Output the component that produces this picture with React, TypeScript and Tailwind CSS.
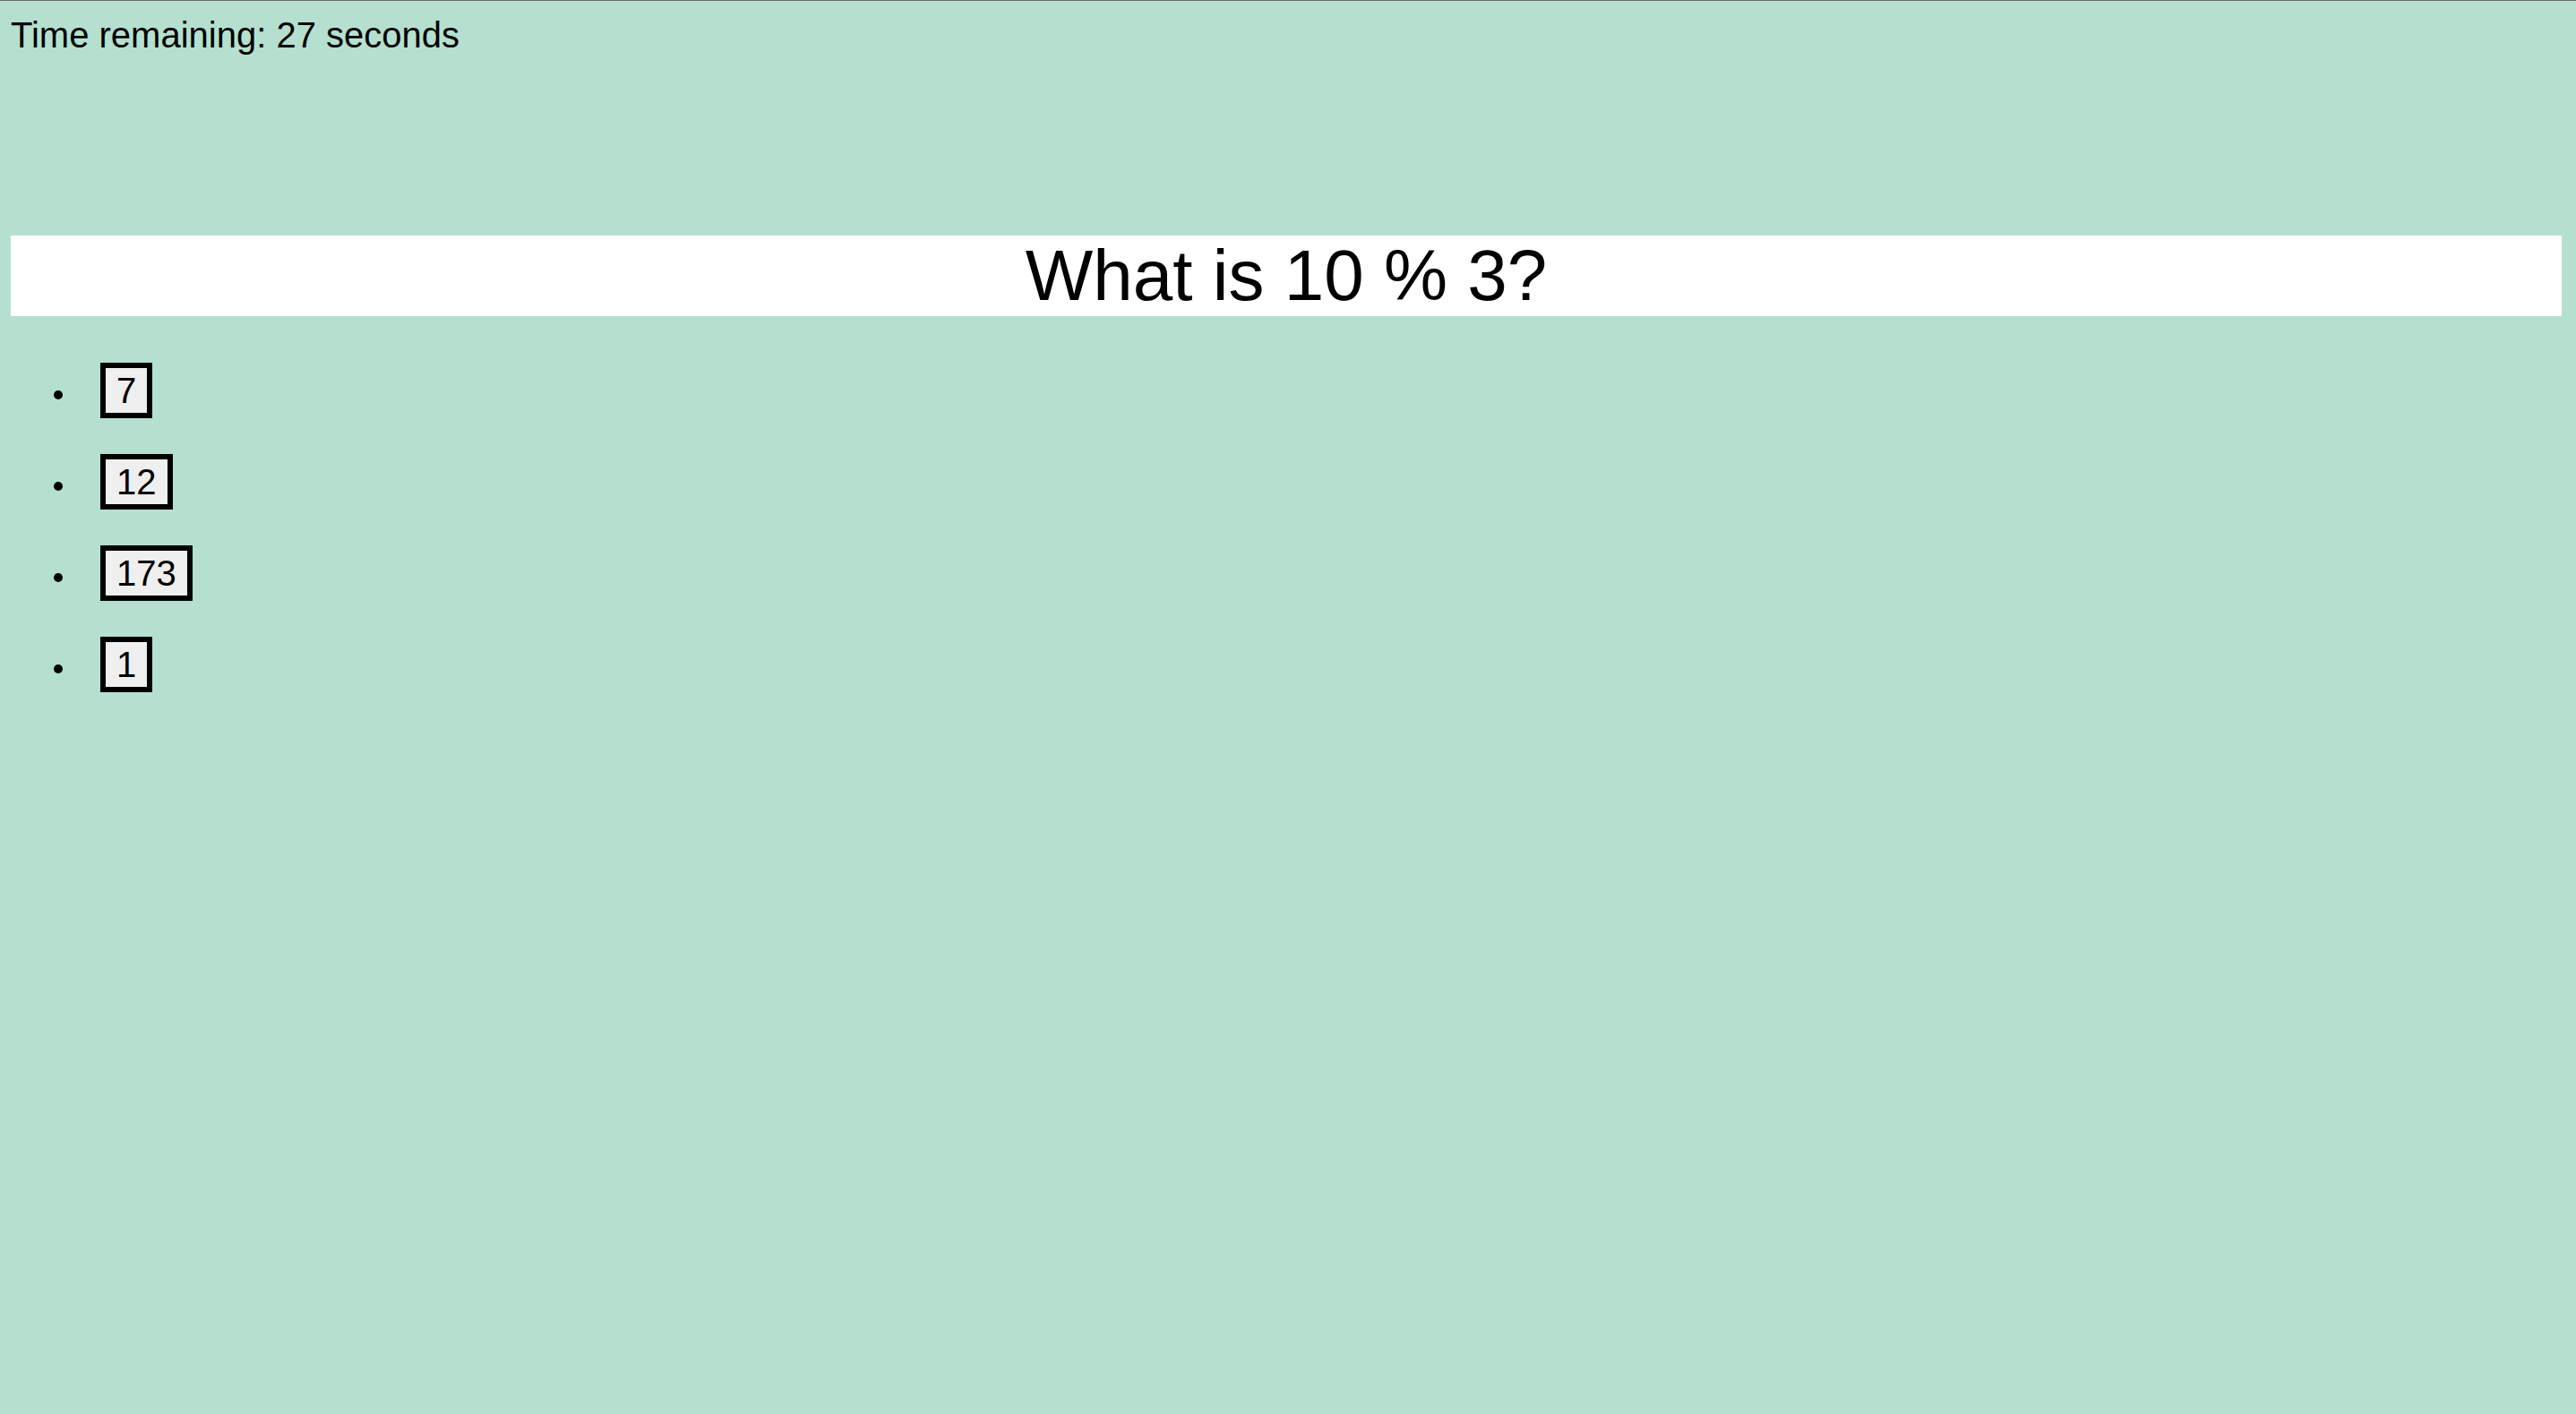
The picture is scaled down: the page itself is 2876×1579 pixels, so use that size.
const answers = ["7", "12", "173", "1"];

export default function App() {
  return (
    <div className="min-h-screen border-t border-[#6b6b6b] bg-[#b5e0d0] pt-4 pr-4 pl-3 font-['Liberation_Sans',Arial,sans-serif] text-black">
      <p className="text-[40px] leading-11">Time remaining: 27 seconds</p>
      <main className="mt-[202px]">
        <h1 className="bg-white text-center text-[80px] leading-[90px]">What is 10 % 3?</h1>
        <ul className="my-8 list-disc pl-[74px] text-[32px] leading-9">
          {answers.map((answer) => (
            <li key={answer}>
              <button
                type="button"
                className="my-5 ml-[26px] border-6 border-black bg-[#efefef] px-3 py-0.5 align-baseline text-[40px] leading-[46px]"
              >
                {answer}
              </button>
            </li>
          ))}
        </ul>
      </main>
    </div>
  );
}
